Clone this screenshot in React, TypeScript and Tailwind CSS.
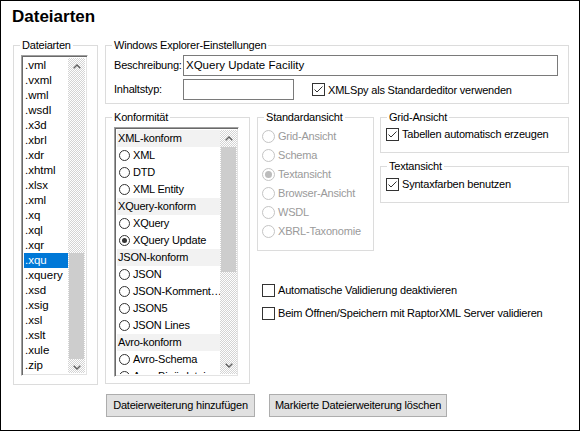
import type { ReactNode } from "react";

const fileTypes = [
  ".vml", ".vxml", ".wml", ".wsdl", ".x3d", ".xbrl", ".xdr", ".xhtml", ".xlsx", ".xml", ".xq",
  ".xql", ".xqr", ".xqu", ".xquery", ".xsd", ".xsig", ".xsl", ".xslt", ".xule", ".zip",
];

type ConformRow = { label: string; header?: boolean; checked?: boolean };

const conformity: ConformRow[] = [
  { label: "XML-konform", header: true },
  { label: "XML" },
  { label: "DTD" },
  { label: "XML Entity" },
  { label: "XQuery-konform", header: true },
  { label: "XQuery" },
  { label: "XQuery Update", checked: true },
  { label: "JSON-konform", header: true },
  { label: "JSON" },
  { label: "JSON-Komment…" },
  { label: "JSON5" },
  { label: "JSON Lines" },
  { label: "Avro-konform", header: true },
  { label: "Avro-Schema" },
  { label: "Avro-Binärdatei" },
];

const views = ["Grid-Ansicht", "Schema", "Textansicht", "Browser-Ansicht", "WSDL", "XBRL-Taxonomie"];

function Group({
  title,
  className,
  inner,
  children,
}: {
  title: string;
  className: string;
  inner: string;
  children?: ReactNode;
}) {
  return (
    <fieldset className={`min-w-0 shrink-0 border border-[#dcdcdc] ${className}`}>
      <legend className="ml-[6px] px-[2px] leading-[14px]">{title}</legend>
      <div className={inner}>{children}</div>
    </fieldset>
  );
}

function Chevron({ down }: { down?: boolean }) {
  return (
    <svg width="8" height="5" viewBox="0 0 8 5">
      <path
        d={down ? "M0.7 0.8 L4 4 L7.3 0.8" : "M0.7 4.2 L4 1 L7.3 4.2"}
        fill="none"
        stroke="#606060"
        strokeWidth="1.4"
      />
    </svg>
  );
}

// classic checkered scrollbar track
function ScrollBar({ offset, thumb }: { offset: number; thumb: number }) {
  return (
    <div className="flex w-[17px] shrink-0 flex-col bg-[repeating-conic-gradient(#d4d4d4_0%_25%,#ffffff_0%_50%)] bg-[length:2px_2px]">
      <div className="flex h-[17px] shrink-0 items-center justify-center">
        <Chevron />
      </div>
      <div className="shrink-0" style={{ height: offset }} />
      <div className="mx-[1px] shrink-0 bg-[#cdcdcd]" style={{ height: thumb }} />
      <div className="flex-1" />
      <div className="flex h-[17px] shrink-0 items-center justify-center">
        <Chevron down />
      </div>
    </div>
  );
}

function Check({ checked }: { checked?: boolean }) {
  return (
    <span className="flex h-[13px] w-[13px] shrink-0 items-center justify-center border border-[#333333] bg-white">
      {checked && (
        <svg width="11" height="11" viewBox="0 0 11 11">
          <path d="M1.5 5.5 L4 8 L9.5 2.5" fill="none" stroke="#333333" strokeWidth="1" />
        </svg>
      )}
    </span>
  );
}

function CheckRow({ label, checked }: { label: string; checked?: boolean }) {
  return (
    <label className="flex items-center gap-[3px] leading-[14px]">
      <Check checked={checked} />
      <span>{label}</span>
    </label>
  );
}

const sunken =
  "border border-[#a0a0a0] border-r-white border-b-white shadow-[inset_1px_1px_0_#696969,inset_-1px_-1px_0_#e3e3e3]";

export default function App() {
  return (
    <div className="h-[433px] w-[582px] bg-white">
      <div className="h-[431px] w-[580px] border border-black bg-white font-['Liberation_Sans',Arial,sans-serif] text-[11px] tracking-[-0.2px] text-black">
        <h1 className="ml-[11px] mt-[5px] text-[17px] font-bold leading-[22px] tracking-normal">Dateiarten</h1>

        <div className="ml-[12px] mt-[10px] flex">
          <Group title="Dateiarten" className="h-[347px] w-[85px]" inner="px-[7px]">
            <div className={`mt-[3px] flex h-[321px] w-[67px] overflow-hidden p-[2px] ${sunken}`}>
              <div className="flex-1 overflow-hidden text-[11.5px] tracking-normal">
                {fileTypes.map((t) => (
                  <div
                    key={t}
                    className={`h-[15px] pl-[1px] leading-[15px] ${t === ".xqu" ? "bg-[#0078d7] text-white" : ""}`}
                  >
                    {t}
                  </div>
                ))}
              </div>
              <ScrollBar offset={178} thumb={106} />
            </div>
          </Group>

          <div className="ml-[7px] flex flex-col">
            <Group title="Windows Explorer-Einstellungen" className="h-[66px] w-[464px]" inner="px-[8px]">
              <div className="mt-[3px] flex items-center">
                <span className="w-[69px] shrink-0">Beschreibung:</span>
                <div className="flex h-[21px] w-[375px] items-center border border-[#7a7a7a] pl-[2px] text-[11.5px] tracking-normal">
                  XQuery Update Facility
                </div>
              </div>
              <div className="mt-[3px] flex items-center">
                <span className="w-[69px] shrink-0">Inhaltstyp:</span>
                <div className="h-[21px] w-[111px] border border-[#7a7a7a]" />
                <div className="ml-[18px]">
                  <CheckRow label="XMLSpy als Standardeditor verwenden" checked />
                </div>
              </div>
            </Group>

            <div className="mt-[6px] flex">
              <Group title="Konformität" className="h-[274px] w-[145px]" inner="px-[8px]">
                <div className={`mt-[3px] flex h-[250px] w-[125px] overflow-hidden py-[2px] pl-[2px] pr-[1px] ${sunken}`}>
                  <div className="flex-1 overflow-hidden text-[11px] tracking-[-0.2px]">
                    {conformity.map((r) =>
                      r.header ? (
                        <div key={r.label} className="h-[17px] bg-[#f2f2f2] pl-[1px] leading-[17px]">
                          {r.label}
                        </div>
                      ) : (
                        <div key={r.label} className="flex h-[17px] items-center gap-[3px] whitespace-nowrap pl-[2px]">
                          <span className="flex h-[11px] w-[11px] shrink-0 items-center justify-center rounded-full border border-[#333333] bg-white">
                            {r.checked && <span className="h-[5px] w-[5px] rounded-full bg-[#333333]" />}
                          </span>
                          <span>{r.label}</span>
                        </div>
                      )
                    )}
                  </div>
                  <ScrollBar offset={0} thumb={125} />
                </div>
              </Group>

              <div className="ml-[7px] flex flex-col">
                <div className="flex">
                  <Group title="Standardansicht" className="h-[141px] w-[117px]" inner="pl-[4px]">
                    <div className="mt-[3px] text-[#9a9a9a]">
                      {views.map((v) => (
                        <div key={v} className="flex h-[19px] items-center gap-[3px]">
                          <span className="flex h-[13px] w-[13px] shrink-0 items-center justify-center rounded-full border border-[#c4c4c4] bg-white">
                            {v === "Textansicht" && <span className="h-[7px] w-[7px] rounded-full bg-[#bcbcbc]" />}
                          </span>
                          <span>{v}</span>
                        </div>
                      ))}
                    </div>
                  </Group>

                  <div className="ml-[6px] flex flex-col">
                    <Group title="Grid-Ansicht" className="h-[43px] w-[189px]" inner="px-[5px]">
                      <div className="mt-[3px]">
                        <CheckRow label="Tabellen automatisch erzeugen" checked />
                      </div>
                    </Group>
                    <Group title="Textansicht" className="mt-[6px] h-[44px] w-[189px]" inner="px-[5px]">
                      <div className="mt-[4px]">
                        <CheckRow label="Syntaxfarben benutzen" checked />
                      </div>
                    </Group>
                  </div>
                </div>

                <div className="ml-[5px] mt-[32px] flex flex-col gap-[9px]">
                  <CheckRow label="Automatische Validierung deaktivieren" />
                  <CheckRow label="Beim Öffnen/Speichern mit RaptorXML Server validieren" />
                </div>
              </div>
            </div>
          </div>
        </div>

        <div className="ml-[105px] mt-[9px] flex gap-[14px]">
          <button className="h-[23px] w-[149px] border border-[#adadad] bg-[#e1e1e1]">Dateierweiterung hinzufügen</button>
          <button className="h-[23px] w-[178px] border border-[#adadad] bg-[#e1e1e1]">
            Markierte Dateierweiterung löschen
          </button>
        </div>
      </div>
    </div>
  );
}
